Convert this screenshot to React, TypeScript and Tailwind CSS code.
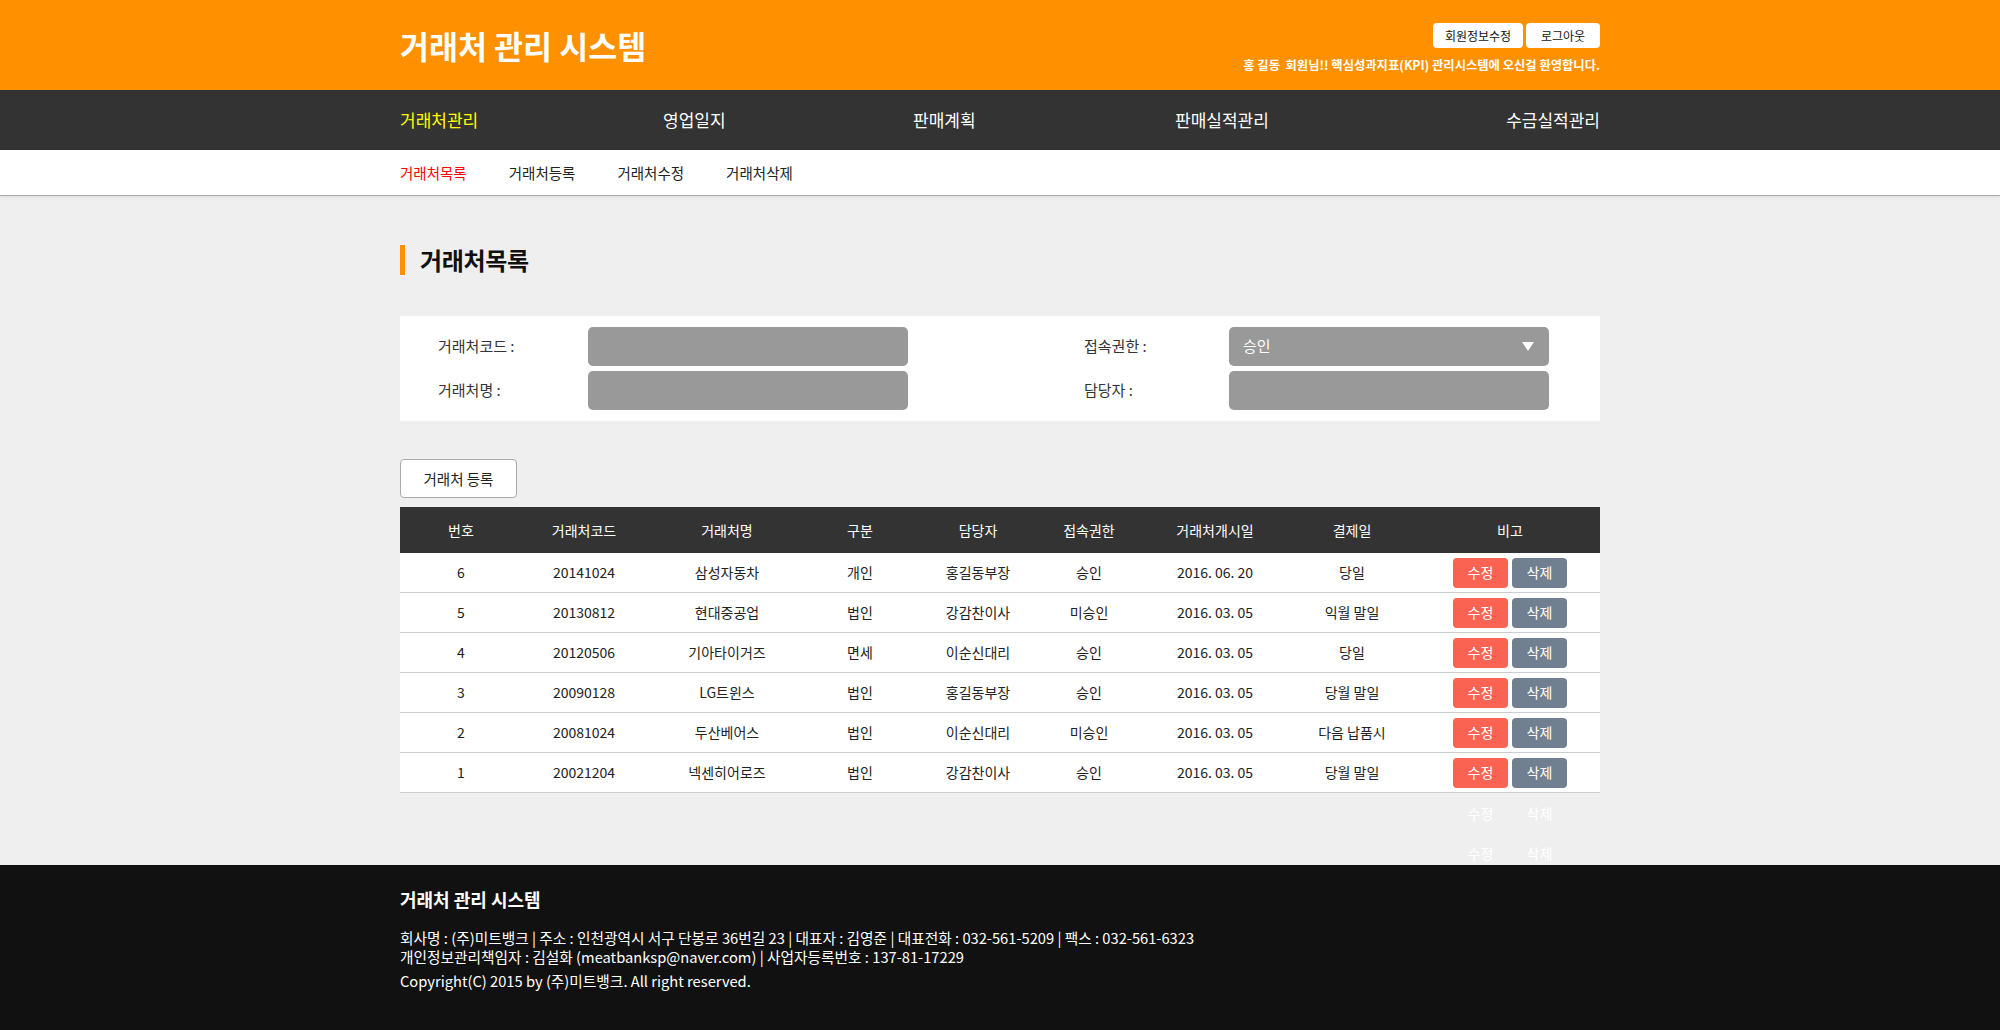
import React from "react";

const FONT = { fontFamily: '"Noto Sans CJK KR", "Noto Sans", sans-serif' };

const rows = [
  { no: 6, code: "20141024", name: "삼성자동차", type: "개인", mgr: "홍길동부장", auth: "승인", date: "2016. 06. 20", pay: "당일" },
  { no: 5, code: "20130812", name: "현대중공업", type: "법인", mgr: "강감찬이사", auth: "미승인", date: "2016. 03. 05", pay: "익월 말일" },
  { no: 4, code: "20120506", name: "기아타이거즈", type: "면세", mgr: "이순신대리", auth: "승인", date: "2016. 03. 05", pay: "당일" },
  { no: 3, code: "20090128", name: "LG트윈스", type: "법인", mgr: "홍길동부장", auth: "승인", date: "2016. 03. 05", pay: "당월 말일" },
  { no: 2, code: "20081024", name: "두산베어스", type: "법인", mgr: "이순신대리", auth: "미승인", date: "2016. 03. 05", pay: "다음 납품시" },
  { no: 1, code: "20021204", name: "넥센히어로즈", type: "법인", mgr: "강감찬이사", auth: "승인", date: "2016. 03. 05", pay: "당월 말일" },
];

const COLS = "grid grid-cols-[122px_124px_162px_104px_132px_90px_162px_112px_192px]";

export default function App() {
  return (
    <div style={FONT} className="min-h-[1030px] bg-[#efefef] text-[#222]">
      {/* Header */}
      <header className="bg-[#ff9100] h-[90px]">
        <div className="w-[1200px] mx-auto flex justify-between items-start">
          <h1 className="mt-[26px] text-[31.5px] leading-[38px] font-bold text-white">거래처 관리 시스템</h1>
          <div className="pt-[23px] flex flex-col items-end">
            <div className="flex gap-[3px]">
              <button className="w-[90px] h-[25px] bg-white rounded-[4px] text-[12px] text-[#111]">회원정보수정</button>
              <button className="w-[74px] h-[25px] bg-white rounded-[4px] text-[12px] text-[#111]">로그아웃</button>
            </div>
            <p className="mt-[9px] text-[12.3px] leading-[16px] text-white font-semibold">
              <span className="font-bold">홍 길동</span>&nbsp; 회원님!! 핵심성과지표(KPI) 관리시스템에 오신걸 환영합니다.
            </p>
          </div>
        </div>
      </header>

      {/* Main nav */}
      <nav className="bg-[#333333] h-[60px]">
        <ul className="w-[1200px] mx-auto h-full flex items-center text-[17px] text-white">
          <li className="w-[263px] text-[#ffff00]">거래처관리</li>
          <li className="w-[250px]">영업일지</li>
          <li className="w-[262px]">판매계획</li>
          <li>판매실적관리</li>
          <li className="ml-auto">수금실적관리</li>
        </ul>
      </nav>

      {/* Sub nav */}
      <div className="bg-white h-[46px] border-b border-[#aaaaaa] shadow-[0_2px_3px_rgba(0,0,0,0.06)]">
        <ul className="w-[1200px] mx-auto h-full flex items-center gap-[42px] text-[14.5px] text-[#222]">
          <li className="text-[#ff0000]">거래처목록</li>
          <li>거래처등록</li>
          <li>거래처수정</li>
          <li>거래처삭제</li>
        </ul>
      </div>

      {/* Content */}
      <main className="w-[1200px] mx-auto pt-[49px]">
        <div className="flex items-center h-[30px] border-l-[5px] border-[#ff9100] pl-[15px]">
          <h2 className="text-[24px] font-bold tracking-[-0.3px] text-[#111] leading-[30px]">거래처목록</h2>
        </div>

        {/* Search form */}
        <div className="mt-[41px] bg-white py-[11px] pl-[38px] grid grid-cols-[150px_320px_176px_145px_320px] gap-y-[5px] items-center text-[15px] text-[#333]">
          <span>거래처코드 :</span>
          <div className="h-[39px] bg-[#999999] rounded-[5px]" />
          <span />
          <span>접속권한 :</span>
          <div className="h-[39px] bg-[#999999] rounded-[5px] flex items-center justify-between pl-[14px] pr-[15px]">
            <span className="text-white text-[15px]">승인</span>
            <svg width="12" height="9" viewBox="0 0 12 9"><path d="M0 0 H12 L6 9 Z" fill="#ffffff" /></svg>
          </div>
          <span>거래처명 :</span>
          <div className="h-[39px] bg-[#999999] rounded-[5px]" />
          <span />
          <span>담당자 :</span>
          <div className="h-[39px] bg-[#999999] rounded-[5px]" />
        </div>

        <button className="mt-[38px] w-[117px] h-[39px] bg-white border border-[#aaaaaa] rounded-[4px] text-[14.5px] text-[#222]">거래처 등록</button>

        {/* Table */}
        <div className="mt-[9px] text-[14px]">
          <div className={`${COLS} h-[46px] bg-[#333333] text-white items-center text-center`}>
            <div>번호</div>
            <div>거래처코드</div>
            <div>거래처명</div>
            <div>구분</div>
            <div>담당자</div>
            <div>접속권한</div>
            <div>거래처개시일</div>
            <div>결제일</div>
            <div className="pl-[12px]">비고</div>
          </div>
          {rows.map((r) => (
            <div key={r.no} className={`${COLS} h-[40px] bg-white border-b border-[#cccccc] items-center text-center text-[#222]`}>
              <div>{r.no}</div>
              <div>{r.code}</div>
              <div>{r.name}</div>
              <div>{r.type}</div>
              <div>{r.mgr}</div>
              <div>{r.auth}</div>
              <div>{r.date}</div>
              <div>{r.pay}</div>
              <div className="pl-[12px] flex justify-center gap-[4px]">
                <button className="w-[55px] h-[30px] rounded-[4px] bg-[#fa6352] text-white">수정</button>
                <button className="w-[55px] h-[30px] rounded-[4px] bg-[#708090] text-white">삭제</button>
              </div>
            </div>
          ))}
          <div className="h-[72px]">
            {[0, 1].map((i) => (
              <div key={i} className={`${COLS} h-[40px] items-center text-center`}>
                <div className="col-start-9 pl-[12px] flex justify-center gap-[4px]">
                  <span className="w-[55px] text-white">수정</span>
                  <span className="w-[55px] text-white">삭제</span>
                </div>
              </div>
            ))}
          </div>
        </div>
      </main>

      {/* Footer */}
      <footer className="bg-[#111111] h-[165px]">
        <div className="w-[1200px] mx-auto pt-[21px] text-white">
          <h3 className="text-[18px] font-bold leading-[26px]">거래처 관리 시스템</h3>
          <p className="mt-[16px] text-[14.7px] leading-[19px]">
            회사명 : (주)미트뱅크 | 주소 : 인천광역시 서구 단봉로 36번길 23 | 대표자 : 김영준 | 대표전화 : 032-561-5209 | 팩스 : 032-561-6323
            <br />
            개인정보관리책임자 : 김설화 (meatbanksp@naver.com) | 사업자등록번호 : 137-81-17229
          </p>
          <p className="mt-[5px] text-[14.7px] leading-[19px]">Copyright(C) 2015 by (주)미트뱅크. All right reserved.</p>
        </div>
      </footer>
    </div>
  );
}
